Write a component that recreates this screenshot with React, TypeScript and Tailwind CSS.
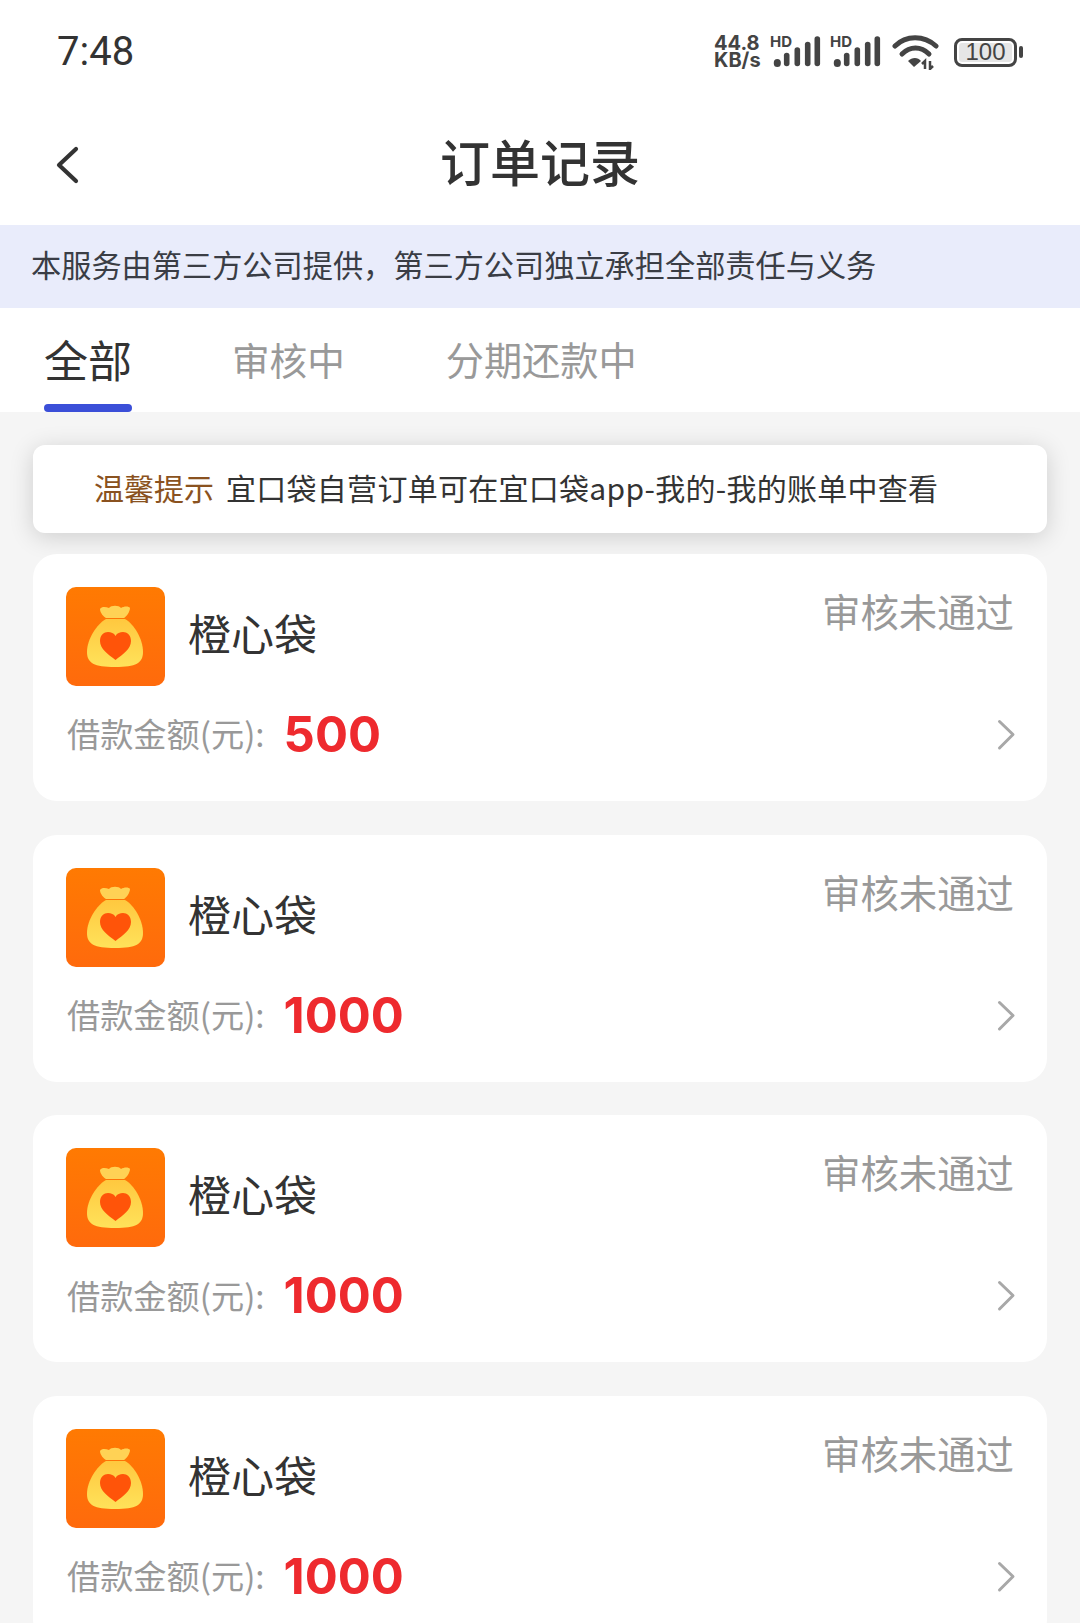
const SANS = "font-['Noto_Sans_CJK_SC','Noto_Sans',sans-serif]";

const SignalIcon = () => (
    <div className="relative w-[50px] h-[34px]">
        <span className="absolute left-[-1px] top-[1px] text-[15px] leading-[12px] font-bold text-[#444] font-['Inter',sans-serif]">HD</span>
        <svg width="50" height="34" viewBox="0 0 50 34" className="absolute left-0 top-0">
            <g stroke="#444" strokeLinecap="round" fill="none" strokeWidth="5.6">
                <path d="M6.3 27.5v1" strokeWidth="7" />
                <path d="M15.7 20.5v8" />
                <path d="M26.3 15v13.5" />
                <path d="M36.7 9.5v19" />
                <path d="M46.3 4v24.5" />
            </g>
        </svg>
    </div>
);

const StatusBar = () => (
    <div className="h-[104px] flex items-center justify-between pl-[57px] pr-[57px]">
        <span className="text-[40px] leading-none text-[#333] font-['Roboto',sans-serif]">7:48</span>
        <div className="flex items-center">
            <div className="flex flex-col text-[#444] font-bold text-[20px] leading-[17px] font-['Inter',sans-serif] w-[57px]">
                <span>44.8</span>
                <span>KB/s</span>
            </div>
            <SignalIcon />
            <div className="ml-[10px]"><SignalIcon /></div>
            <svg width="48" height="36" viewBox="0 0 48 36" className="ml-[11px]">
                <g stroke="#444" strokeWidth="5" fill="none" strokeLinecap="round">
                    <path d="M3 12C14 1 32 1 44 12" />
                    <path d="M10 20C18 12 29 12 37 20" />
                </g>
                <path d="M16 27c4-4 10-4 13 0l-7 6z" fill="#444" />
                <path d="M33 35v-8l-3 3M38 27v8l3-3" stroke="#444" strokeWidth="2.5" fill="none" />
            </svg>
            <div className="flex items-center ml-[14px]">
                <div className="w-[63px] h-[29px] rounded-[8px] border-[3px] border-[#444] p-[2px]">
                    <div className="h-full rounded-[3px] bg-[#e6e6e6] flex items-center justify-center text-[24px] leading-none text-[#444] font-['Liberation_Sans',sans-serif]">100</div>
                </div>
                <div className="ml-[2px] w-[4px] h-[12px] rounded-full bg-[#444]"></div>
            </div>
        </div>
    </div>
);

const BagLogo = () => (
    <div className="w-[99px] h-[99px] shrink-0 rounded-[10px] bg-gradient-to-b from-[#ff7a02] to-[#ff6a0c]">
        <svg width="99" height="99" viewBox="0 0 99 99">
            <defs>
                <linearGradient id="bag" x1="0" y1="0" x2="0" y2="1">
                    <stop offset="0" stopColor="#ffc83f" />
                    <stop offset="1" stopColor="#ffe25a" />
                </linearGradient>
            </defs>
            <path d="M34 22C36 19 40 20 43 21C45 18 53 18 55 21C58 19 63 19 64 21C64 25 60 30 58 31H40C38 30 34 26 34 22Z" fill="#ffd255" />
            <path d="M40 32H59C68 37 77 52 77 65C77 76 70 80 49 80C28 80 21 76 21 65C21 52 31 37 40 32Z" fill="url(#bag)" />
            <path d="M49.5 73C42 67 34 62 34 54C34 48 38 45 42 45C45 45 48 46 49.5 49C51 46 54 45 57 45C61 45 65 48 65 54C65 62 57 67 49.5 73Z" fill="#ff5409" />
        </svg>
    </div>
);

const OrderCard = ({ amount }: { amount: string }) => (
    <div className="bg-white rounded-[24px] h-[247px] px-[33px] pt-[33px] flex flex-col">
        <div className="flex justify-between items-start">
            <div className="flex items-center">
                <BagLogo />
                <span className="ml-[23px] mt-[-8px] text-[43px] leading-none text-[#333]">橙心袋</span>
            </div>
            <span className="text-[38.4px] leading-none text-[#999] mt-[4px]">审核未通过</span>
        </div>
        <div className="flex items-center mt-[14px] h-[66px]">
            <span className="text-[33.2px] leading-none text-[#999] ml-[1px]">借款金额(元):</span>
            <span className="ml-[19px] mt-[3px] text-[49px] leading-none font-bold text-[#ee2a2e] font-['Inter',sans-serif]">{amount}</span>
            <svg width="20" height="32" viewBox="0 0 20 32" className="ml-auto mr-[-3px] mt-[4px]">
                <path d="M2.5 2.5L16 15.5L2.5 29" stroke="#a8a8a8" strokeWidth="3" fill="none" strokeLinecap="round" strokeLinejoin="round" />
            </svg>
        </div>
    </div>
);

export default function App() {
    return (
        <div className={`w-[1080px] h-[1623px] overflow-hidden bg-[#f5f5f5] ${SANS}`}>
            <div className="bg-white">
                <StatusBar />
                <div className="h-[121px] relative flex items-center justify-center">
                    <svg width="24" height="40" viewBox="0 0 24 40" className="absolute left-[55px] top-[41px]">
                        <path d="M21 4L4 20L21 36" stroke="#333" strokeWidth="4.2" fill="none" strokeLinecap="round" strokeLinejoin="round" />
                    </svg>
                    <span className="text-[50px] font-medium leading-none text-[#333] mt-[-10px]">订单记录</span>
                </div>
            </div>
            <div className="h-[83px] bg-[#e9ecfb] flex items-center pl-[31px] text-[30.2px] leading-none text-[#3a3d45] pb-[4px]">
                本服务由第三方公司提供，第三方公司独立承担全部责任与义务
            </div>
            <div className="h-[104px] bg-white flex items-start pl-[44px]">
                <div className="relative h-full w-[88px]">
                    <span className="block mt-[29px] text-[44px] leading-none text-[#333]">全部</span>
                    <div className="absolute bottom-0 left-0 w-[88px] h-[8px] rounded-full bg-[#3b4fd8]"></div>
                </div>
                <span className="ml-[100px] mt-[32px] text-[37.6px] leading-none text-[#999]">审核中</span>
                <span className="ml-[101px] mt-[32px] text-[38.2px] leading-none text-[#999]">分期还款中</span>
            </div>
            <div className="px-[33px] pt-[33px] flex flex-col">
                <div className="h-[88px] bg-white rounded-[12px] shadow-[0_4px_24px_rgba(0,0,0,0.16)] flex items-center pl-[61px] text-[30px] leading-none text-[#333] pb-[4px]">
                    <span className="text-[#8a5220]">温馨提示</span>
                    <span className="ml-[12px] tracking-[0.28px]">宜口袋自营订单可在宜口袋app-我的-我的账单中查看</span>
                </div>
                <div className="mt-[21px] flex flex-col gap-[33.7px]">
                    <OrderCard amount="500" />
                    <OrderCard amount="1000" />
                    <OrderCard amount="1000" />
                    <OrderCard amount="1000" />
                </div>
            </div>
        </div>
    );
}
